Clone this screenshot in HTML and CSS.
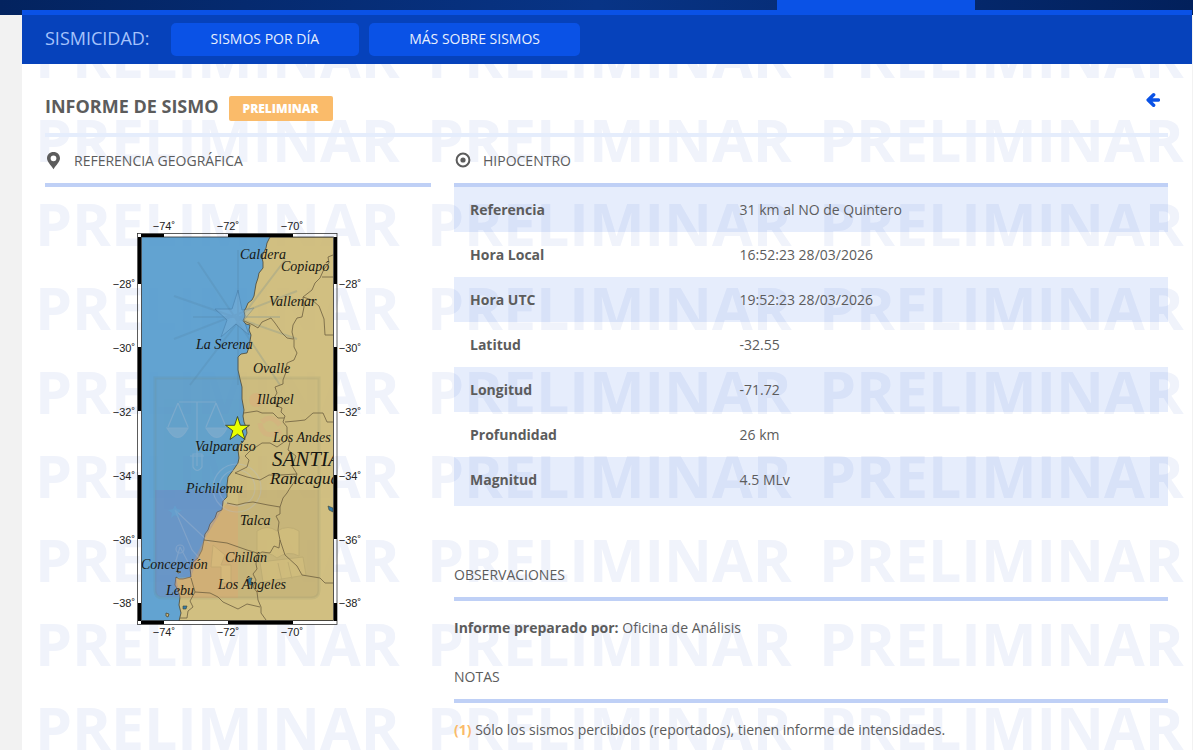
FILE: index.html
```html
<!DOCTYPE html>
<html lang="es">
<head>
<meta charset="utf-8">
<meta name="viewport" content="width=device-width, initial-scale=1">
<title>Informe de sismo</title>
<link rel="stylesheet" href="styles.css">
</head>
<body>
<header class="topbar"><div class="topbar-tab"></div></header>
<div class="panel">
  <nav class="subnav" aria-label="Sismicidad">
    <span class="subnav-title">SISMICIDAD:</span>
    <a class="subnav-link" href="#dia">SISMOS POR DÍA</a>
    <a class="subnav-link" href="#mas">MÁS SOBRE SISMOS</a>
  </nav>
  <main class="report">
    <div class="watermark" aria-hidden="true">
      <span>PRELIMINAR</span><span>PRELIMINAR</span><span>PRELIMINAR</span>
      <span>PRELIMINAR</span><span>PRELIMINAR</span><span>PRELIMINAR</span>
      <span>PRELIMINAR</span><span>PRELIMINAR</span><span>PRELIMINAR</span>
      <span>PRELIMINAR</span><span>PRELIMINAR</span><span>PRELIMINAR</span>
      <span>PRELIMINAR</span><span>PRELIMINAR</span><span>PRELIMINAR</span>
      <span>PRELIMINAR</span><span>PRELIMINAR</span><span>PRELIMINAR</span>
      <span>PRELIMINAR</span><span>PRELIMINAR</span><span>PRELIMINAR</span>
      <span>PRELIMINAR</span><span>PRELIMINAR</span><span>PRELIMINAR</span>
      <span>PRELIMINAR</span><span>PRELIMINAR</span><span>PRELIMINAR</span>
    </div>
    <div class="report-head">
      <h1 class="report-title">INFORME DE SISMO</h1>
      <span class="badge">PRELIMINAR</span>
      <a class="back" href="#volver" aria-label="Volver">
        <svg width="14" height="16" viewBox="0 0 14 16"><path d="M7.600 2.800 2.200 8 7.600 13.200M2.800 8H12.400" fill="none" stroke="#0a52e6" stroke-width="3.500" stroke-linecap="round" stroke-linejoin="round"/></svg>
      </a>
    </div>
    <div class="columns">
      <section>
        <h2 class="section-title">
          <svg class="icon" width="17" height="18" viewBox="0 0 17 18"><path fill-rule="evenodd" d="M8.500 0C4.700 0 2 2.700 2 6.200c0 3.500 3.600 6.300 6.500 11 2.900-4.700 6.500-7.500 6.500-11C15 2.700 12.300 0 8.500 0zM8.500 3.400a2.900 2.900 0 1 1 0 5.800 2.900 2.900 0 0 1 0-5.800z" fill="#5c5c5c"/></svg>
          REFERENCIA GEOGRÁFICA
        </h2>
        <svg class="map" width="276" height="425" viewBox="100 215 276 425" role="img" aria-label="Mapa del epicentro">
          <defs>
            <clipPath id="inner"><rect x="141.500" y="237" width="192" height="384"/></clipPath>
          </defs>
          <g clip-path="url(#inner)">
            <g opacity=".9">
              <rect x="141" y="237" width="193" height="384" fill="#5299cc"/>
              <path d="M270 237 267 243 266 248 263 254 262 258 263 262 263 268 259 273 258 278 256 284 255 290 254 296 252 300 248 303 246 308 244 311 245 316 243 321 246 324 250 325 249 330 251 335 250 341 249 347 247 353 241 354 238 357 238 370 240 379 242 387 242 399 244 410 243 416 244 422 246 427 247 433 245 438 243 442 239 445 238 450 239 458 238 463 234 469 228 477 227 485 227 497 223 501 222 510 217 512 215 518 210 524 208 530 205 534 204 540 203 545 202 550 198 558 193 562 190 568 191 577 183 579 179 579 176 577 175 585 178 590 180 597 179 605 181 613 179 621H334V237Z" fill="#cdb874" stroke="#37331f" stroke-width=".8" stroke-linejoin="round"/>
            </g>
            <path d="M215 518 227 503 238 506V598H180L175 585 176 578 191 577 193 562 204 540Z" fill="#d9a16c" opacity=".4"/>
            <path d="M155 378H319V590q0 8-8 8H163q-8 0-8-8Z" fill="#918359" opacity=".05"/>
            <path d="M238 490H319V590q0 8-8 8H238Z" fill="#a0905f" opacity=".14"/>
            <path d="M155 490H227L222 510 204 540 191 577 176 577 180 597H163q-8 0-8-8Z" fill="#7878bc" opacity=".26"/>
            <path d="M155 378H319V590q0 8-8 8H163q-8 0-8-8Z" fill="none" stroke="#75866f" stroke-width="3" opacity=".13"/>
            <g stroke="#527e99" stroke-width="2" opacity=".2" fill="none">
              <path d="M238 250V385M174 339 297 291M174 296 297 339M198 262 280 385M285 260 190 385M193 317H280"/>
            </g>
            <path d="M238 290 242 310 254 308 244 320 249 335 236 324 221 337 227 320 215 309 232 309Z" fill="#8bb9df" opacity=".28" stroke="#355d84"/>
            <g fill="none" stroke="#b5c1d1" stroke-width="1.200" opacity=".3">
              <path d="M179 402H216M178 403 168 427M178 403 188 427M216 403 206 427M216 403 226 427M197 402V466M190 456H204"/>
              <path d="M167 428Q178 447 188 428ZM206 428Q217 447 227 428Z" fill="#a6bdd2"/>
              <path d="M193 454H202V467Q197 474 193 467ZM175 510 192 550 201 560M175 510 210 543M180 547 175 564M180 547 188 562"/>
              <circle cx="237" cy="488" r="24"/><circle cx="237" cy="488" r="18"/><circle cx="180" cy="549" r="4"/>
            </g>
            <circle cx="256" cy="400" r="7" fill="#e6a376" opacity=".3"/>
            <path d="M262 422q8-9 18 3M260 423q3 18 21 8" stroke="#dda481" fill="none" stroke-width="5" opacity=".28"/>
            <g fill="#e0c982" stroke="#b0a169" opacity=".35">
              <path d="M257 531q10-7 20 0 11-7 22 0v25q-11-6-22 2-9-8-20-2ZM260 562l43-5 3 18-43 7ZM278 563l4 18M288 562l4 17M213 545l12 10-4 10h10v18h-10v-16h-10Z"/>
            </g>
            <path d="M175 505l2 4 5 1-4 3 1 5-4-3-4 3 1-5-4-3 5-1Z" fill="#63a3d1" opacity=".6"/>
            <g fill="none" stroke="#6d6040" stroke-width=".8" stroke-linejoin="round">
              <path d="M333 255 328 257 329 263 324 269 320 278 315 283 312 290 303 297 304 307 302 317 297 318 293 325 292 332 294 340 294 347 297 353 294 360 287 363 286 372 283 380 283 384 275 387 277 393 274 398 277 406 282 408 281 412 285 416 283 422 287 427 287 437 290 442 288 450 296 456 292 466 297 474 295 481 290 488 287 493 283 498 280 507 280 514 276 516 279 522 278 530 280 540 279 548 274 546 270 553 262 552 257 555 256 564 257 569 253 574 256 580 253 587 257 592 258 600 261 607 261 613 266 620"/>
              <path d="M303 297 312 300 319 306 324 319 325 335H333M322 277H333M244 321 253 325 258 328 262 322 271 318 275 323 282 333 287 338 293 339M244 413 257 411 262 413 273 413 278 418 284 418M285 422 296 421 305 420 313 413H323L327 422H333M235 473 247 467 249 460 245 456 250 451 262 443 270 443 277 447 287 440M235 473 247 477 260 480 269 475 280 475 297 474M227 503 237 505 245 503 253 502 268 505 280 507M204 540 227 543 247 550 257 553M280 540 285 555 297 566 302 575 320 578 325 583H333M191 578 195 592 210 593 218 597 223 602 238 609 247 604 260 607M195 592 190 601 193 607 188 611 187 618H180"/>
            </g>
            <path d="M328 506l5 2v4l-4-2ZM249 578h3l-1 3 1 4h-2l-2-4ZM183 606h4l-1 3h-3Z" fill="#357caa" stroke="#3c4536" stroke-width=".6"/>
            <path d="M166 613l3 1-1 3-2-1ZM177 571l4 1-3 1Z" fill="#c9b77b" stroke="#4e4936" stroke-width=".8"/>
            <g class="city">
              <text x="240" y="259">Caldera</text><text x="281" y="271">Copiapó</text>
              <text x="269" y="306">Vallenar</text><text x="196" y="349">La Serena</text>
              <text x="253" y="373">Ovalle</text><text x="257" y="404">Illapel</text>
              <text x="273" y="442">Los Andes</text><text x="195" y="451">Valparaiso</text>
              <text class="capital" x="272" y="466">SANTIAGO</text><text class="large" x="270" y="484">Rancagua</text>
              <text x="186" y="493">Pichilemu</text><text x="240" y="525">Talca</text>
              <text x="225" y="562">Chillán</text><text x="141" y="569">Concepción</text>
              <text x="218" y="589">Los Ángeles</text><text x="166" y="595">Lebu</text>
            </g>
            <path d="M237.500 416.500 240.400 425.300 249.500 425.300 242.200 430.700 245 439.500 237.500 434.200 230 439.500 232.800 430.700 225.500 425.300 234.600 425.300Z" fill="#e8ff00" stroke="#3c432c" stroke-width=".9"/>
          </g>
          <g fill="none" stroke="#333" stroke-width=".8"><rect x="137.500" y="233.500" width="199.500" height="391"/><rect x="141.500" y="237" width="192" height="383.500"/></g>
          <path d="M141 234H164V237H141ZM228 234H293V237H228ZM141 621H164V624H141ZM228 621H293V624H228ZM138 237H141V284H138ZM138 347H141V411H138ZM138 475H141V539H138ZM138 603H141V621H138ZM334 237H337V284H334ZM334 347H337V411H334ZM334 475H337V539H334ZM334 603H337V621H334Z"/>
          <g class="tick" text-anchor="middle">
            <text x="164" y="230">−74˚</text><text x="228" y="230">−72˚</text><text x="292" y="230">−70˚</text>
            <text x="164" y="636">−74˚</text><text x="228" y="636">−72˚</text><text x="292" y="636">−70˚</text>
            <text x="124" y="288">−28˚</text><text x="124" y="352">−30˚</text><text x="124" y="416">−32˚</text><text x="124" y="480">−34˚</text><text x="124" y="544">−36˚</text><text x="124" y="607">−38˚</text>
            <text x="350" y="288">−28˚</text><text x="350" y="352">−30˚</text><text x="350" y="416">−32˚</text><text x="350" y="480">−34˚</text><text x="350" y="544">−36˚</text><text x="350" y="607">−38˚</text>
          </g>
        </svg>
      </section>
      <section>
        <h2 class="section-title">
          <svg class="icon" width="17" height="18" viewBox="0 0 17 18"><circle cx="9" cy="8" r="6.400" fill="none" stroke="#5c5c5c" stroke-width="2"/><circle cx="9" cy="8" r="2.600" fill="#5c5c5c"/></svg>
          HIPOCENTRO
        </h2>
        <table class="data">
          <tr><th scope="row">Referencia</th><td>31 km al NO de Quintero</td></tr>
          <tr><th scope="row">Hora Local</th><td>16:52:23 28/03/2026</td></tr>
          <tr><th scope="row">Hora UTC</th><td>19:52:23 28/03/2026</td></tr>
          <tr><th scope="row">Latitud</th><td>-32.55</td></tr>
          <tr><th scope="row">Longitud</th><td>-71.72</td></tr>
          <tr><th scope="row">Profundidad</th><td>26 km</td></tr>
          <tr><th scope="row">Magnitud</th><td>4.5 MLv</td></tr>
        </table>
        <h2 class="section-title section-observations">OBSERVACIONES</h2>
        <p class="note"><strong>Informe preparado por:</strong> Oficina de Análisis</p>
        <h2 class="section-title">NOTAS</h2>
        <p class="note"><strong class="note-number">(1)</strong> Sólo los sismos percibidos (reportados), tienen informe de intensidades.</p>
      </section>
    </div>
  </main>
</div>
</body>
</html>
```
FILE: styles.css
```css
* { box-sizing: border-box; }

body {
  margin: 0;
  background: #f2f2f2;
  color: #5c5c5c;
  font: 14px/20px "Open Sans", sans-serif;
}

.topbar {
  height: 15px;
  padding-right: 218px;
  display: flex;
  justify-content: flex-end;
  background: linear-gradient(90deg, #03235f, #083486 50%, #02205b);
}

.topbar-tab {
  width: 198px;
  background: #0a52e6;
}

.panel {
  position: relative;
  margin: -5px 1px 0 22px;
  border-top: 5px solid #0a52e6;
  background: #fff;
}

.subnav {
  display: flex;
  align-items: center;
  gap: 10px;
  min-height: 49px;
  padding: 8px 23px;
  background: #0642bb;
}

.subnav-title {
  margin-right: 11px;
  padding-bottom: 4px;
  color: #a5c2fb;
  font-size: 18px;
  line-height: 24px;
}

.subnav-link {
  padding: 6px 40px 7px;
  border-radius: 5px;
  background: #0a52e6;
  color: #e8effd;
  text-decoration: none;
}

.report {
  position: relative;
  min-height: calc(100vh - 64px);
  padding: 0 24px 0 23px;
  overflow: hidden;
}

.watermark {
  position: absolute;
  inset: -51px 0 0 13px;
  display: grid;
  grid-template-columns: repeat(3, 392px);
  grid-auto-rows: 84px;
  overflow: hidden;
  color: #f0f3fb;
  font: 700 59px/84px "Open Sans", sans-serif;
}

.report-head,
.columns { position: relative; }

.report-head {
  display: flex;
  align-items: center;
  gap: 10px;
  height: 73px;
  padding-top: 16px;
  border-bottom: 4px solid #e5edfc;
}

.report-title {
  margin: 0;
  padding-bottom: 2px;
  font-size: 18px;
  font-weight: 700;
  line-height: 24px;
}

.badge {
  margin-top: 4px;
  padding: 3px 14px 2px;
  border-radius: 2px;
  background: #fabb6a;
  color: #fff;
  font-size: 12px;
  font-weight: 800;
}

.back {
  display: flex;
  margin: 0 8px 14px auto;
}

.columns {
  display: grid;
  grid-template-columns: minmax(0, 386fr) minmax(0, 714fr);
  gap: 23px;
}

.section-title {
  display: flex;
  align-items: center;
  gap: 12px;
  margin: 0;
  padding: 14px 0 12px;
  border-bottom: 4px solid #bfd0f6;
  font-size: 14px;
  font-weight: 400;
  line-height: 20px;
}

.map {
  display: block;
  max-width: 100%;
  margin: 28px auto 0;
}

.city {
  fill: #171711;
  font: italic 14px "Liberation Serif", serif;
}

.capital { font-size: 21px; }

.large { font-size: 17px; }

.tick {
  fill: #222;
  font: 11px "Liberation Sans", sans-serif;
}

.data {
  width: 100%;
  table-layout: fixed;
  border-collapse: collapse;
}

.data tr:nth-child(odd) { background: rgba(10, 82, 230, 0.1); }

.data th,
.data td {
  padding: 13px 0 12px;
  text-align: left;
}

.data tr:last-child th,
.data tr:last-child td { padding-bottom: 16px; }

.data th {
  width: 40%;
  padding-left: 16px;
  font-weight: 700;
}

.section-observations {
  margin-top: 45px;
}

.note {
  margin: 0;
  padding: 17px 0 15px;
}

.note-number { color: #fabb6a; }
```
